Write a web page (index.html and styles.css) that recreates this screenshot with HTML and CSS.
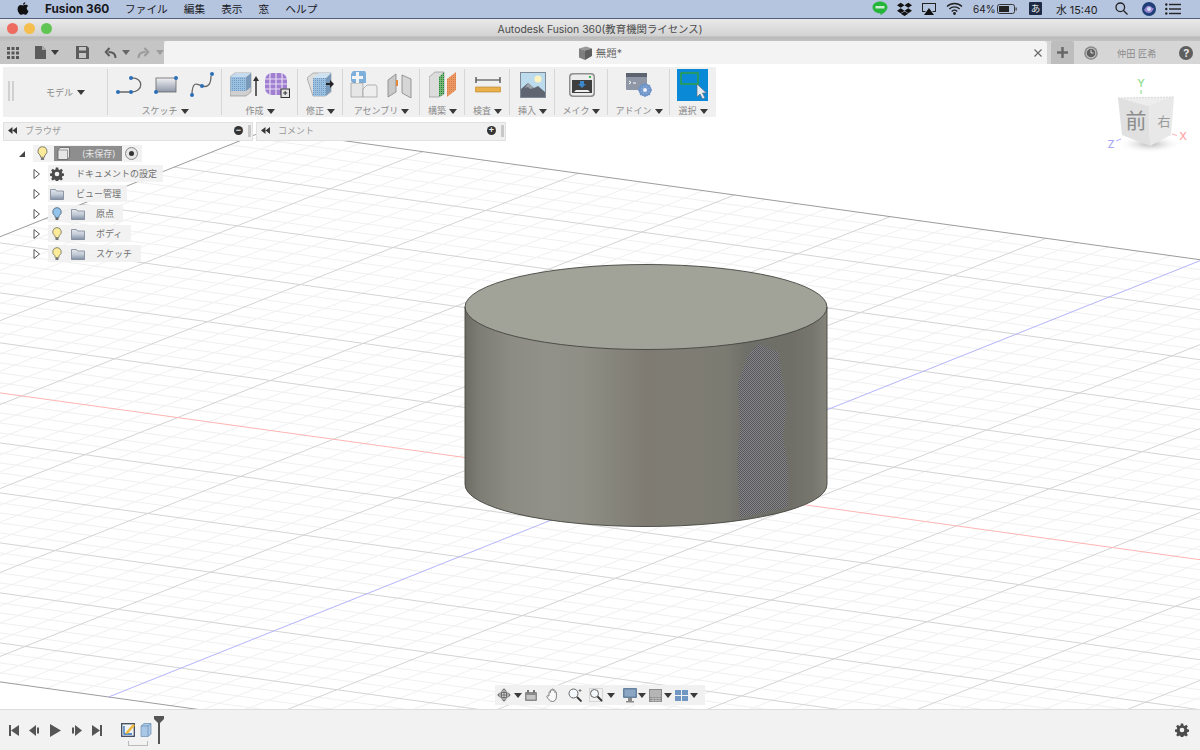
FILE: index.html
```html
<!DOCTYPE html>
<html lang="ja">
<head>
<meta charset="utf-8">
<title>Autodesk Fusion 360</title>
<link rel="stylesheet" href="styles.css">
</head>
<body>
<svg class="defs" width="0" height="0" aria-hidden="true">
  <defs>
    <linearGradient id="gFolder" x1="0" y1="0" x2="0" y2="1"><stop offset="0" stop-color="#e4e8ee"/><stop offset=".5" stop-color="#c2cad6"/><stop offset="1" stop-color="#7f8ea6"/></linearGradient>
    <linearGradient id="gSide" x1="0" y1="0" x2="1" y2="0">
      <stop offset="0" stop-color="#6c6c65"/><stop offset=".04" stop-color="#7d7d75"/><stop offset=".12" stop-color="#8b8b82"/><stop offset=".22" stop-color="#91918a"/><stop offset=".32" stop-color="#8f8f86"/><stop offset=".42" stop-color="#85847b"/><stop offset=".5" stop-color="#7f7b72"/><stop offset=".6" stop-color="#7f7d73"/><stop offset=".72" stop-color="#7b7b72"/><stop offset=".78" stop-color="#6f6f69"/><stop offset=".9" stop-color="#6f6f68"/><stop offset=".96" stop-color="#76766e"/><stop offset="1" stop-color="#84847b"/>
    </linearGradient>
    <pattern id="pDither" width="2" height="2" patternUnits="userSpaceOnUse"><rect width="2" height="2" fill="#88888c"/><rect width="1" height="1" fill="#55555a"/><rect x="1" y="1" width="1" height="1" fill="#55555a"/></pattern>
    <pattern id="pDots" width="2" height="2" patternUnits="userSpaceOnUse"><rect width="2" height="2" fill="#9cc0de"/><rect width="1" height="1" fill="#6f9dc8"/></pattern>
    <pattern id="pGreen" width="2" height="2" patternUnits="userSpaceOnUse"><rect width="2" height="2" fill="#78b478"/><rect width="1" height="1" fill="#1f8a3a"/></pattern>
    <pattern id="pOrange" width="2" height="2" patternUnits="userSpaceOnUse"><rect width="2" height="2" fill="#eb9a66"/><rect width="1" height="1" fill="#d87a44"/></pattern>
    <symbol id="folder" viewBox="0 0 14 12"><path d="M.5 1.500h5l1 1.500h7v8.500h-13z" fill="url(#gFolder)" stroke="#7b8494" stroke-width=".8"/></symbol>
    <symbol id="bulbY" viewBox="0 0 10 14"><path d="M5 .6a4.300 4.300 0 0 0-2.300 7.900l.6 2h3.400l.6-2A4.300 4.300 0 0 0 5 .6z" fill="#fbeb9a" stroke="#6f6f60" stroke-width=".8"/><path d="M3.500 11h3v2h-3z" fill="#777"/></symbol>
    <symbol id="bulbB" viewBox="0 0 10 14"><path d="M5 .6a4.300 4.300 0 0 0-2.300 7.900l.6 2h3.400l.6-2A4.300 4.300 0 0 0 5 .6z" fill="#93c4ec" stroke="#4e6276" stroke-width=".8"/><path d="M3.500 11h3v2h-3z" fill="#666"/></symbol>
    <symbol id="twisty" viewBox="0 0 8 12"><path d="M1 1.500l5.500 4.500L1 10.500z" fill="#fff" stroke="#555" stroke-width="1"/></symbol>
    <symbol id="gear" viewBox="0 0 24 24"><path fill="#4c4c4c" d="M10 1h4l.6 3.200 2 .8 2.700-1.900 2.800 2.800-1.900 2.700.8 2 3 .6v4l-3 .6-.8 2 1.900 2.700-2.800 2.800-2.700-1.900-2 .8-.6 3h-4l-.6-3-2-.8-2.700 1.900-2.800-2.800 1.900-2.700-.8-2-3-.6v-4l3-.6.8-2L1.900 5.900l2.800-2.800 2.700 1.900 2-.8zM12 8a4 4 0 1 0 0 8 4 4 0 0 0 0-8z"/></symbol>
  </defs>
</svg>

<div class="app">
  <header class="menubar">
    <svg class="apple" width="12" height="14" viewBox="0 0 12 14"><path d="M8.300.3c.1 1.100-.9 2.500-2.300 2.500C5.900 1.600 7 .4 8.300.3zM6.100 3.500c.6 0 1.500-.7 2.600-.7 1 0 1.900.5 2.400 1.300-2 1.200-1.700 3.900.4 4.800-.5 1.400-1.700 3.900-3 3.900-.8 0-1.100-.5-2.200-.5s-1.500.5-2.200.5C2.600 12.800.6 9.700.6 7.200c0-2.600 1.700-4.100 3.300-4.100.9 0 1.700.4 2.200.4z" fill="#111"/></svg>
    <nav class="menus">
      <strong class="appname">Fusion 360</strong>
      <span>ファイル</span><span>編集</span><span>表示</span><span>窓</span><span>ヘルプ</span>
    </nav>
    <div class="status">
      <svg width="16" height="15" viewBox="0 0 16 15"><path d="M8 .5c4.200 0 7.500 2.600 7.500 5.800 0 3-3.800 6-7 8 .3-1 .3-2-.5-2C3.800 12.300.5 9.600.5 6.300.5 3.100 3.800.5 8 .5z" fill="#25b53a"/><rect x="3.500" y="5" width="9" height="2.500" fill="#cdeecf"/></svg>
      <svg width="15" height="14" viewBox="0 0 15 14"><path d="M3.700.8L7.500 3.300 3.700 5.800 0 3.300zM11.300.8L15 3.300 11.300 5.800 7.500 3.300zM3.700 6.200l3.800 2.500-3.800 2.500L0 8.700zM11.300 6.200L15 8.700l-3.700 2.500-3.800-2.500zM3.800 11.800l3.700-2.400 3.700 2.400-3.700 2.200z" fill="#111"/></svg>
      <svg width="16" height="14" viewBox="0 0 16 14"><path d="M1 1h14v9h-3l-1-1h3V2H2v7h3l-1 1H1z" fill="#222"/><path d="M8 6l5 7H3z" fill="#111"/></svg>
      <svg width="17" height="13" viewBox="0 0 17 13" fill="none" stroke="#222" stroke-width="1.300"><path d="M1 4.500c4.200-4 10.800-4 15 0M3.300 7c3-2.800 7.400-2.800 10.400 0M5.700 9.400c1.700-1.500 3.900-1.500 5.600 0"/><circle cx="8.500" cy="11.500" r=".8" fill="#222"/></svg>
      <span class="st pct gap-1">64%</span>
      <svg class="gap-2" width="20" height="10" viewBox="0 0 20 10"><rect x=".5" y=".5" width="17" height="9" rx="2" fill="none" stroke="#333"/><rect x="2" y="2" width="10" height="6" fill="#222"/><rect x="18.500" y="3.500" width="1.300" height="3" fill="#444"/></svg>
      <span class="ime gap-3">あ</span>
      <span class="st clock gap-4">水 15:40</span>
      <svg class="gap-5" width="13" height="13" viewBox="0 0 13 13" fill="none" stroke="#222" stroke-width="1.300"><circle cx="5.300" cy="5.300" r="4.300"/><path d="M8.500 8.500l4 4"/></svg>
      <svg class="gap-6" width="14" height="14" viewBox="0 0 14 14"><circle cx="7" cy="7" r="7" fill="#1f3f78"/><path d="M2 8c2-4 4-5 6-4s3 3 4 2c-1 3-3 5-5 5S3 10 2 8z" fill="#9a86d0"/><circle cx="7" cy="7" r="2" fill="#cfe0f5"/></svg>
      <svg width="16" height="12" viewBox="0 0 16 12" fill="#222"><circle cx="1.300" cy="1.500" r="1.200"/><circle cx="1.300" cy="6" r="1.200"/><circle cx="1.300" cy="10.500" r="1.200"/><rect x="4" y=".8" width="12" height="1.400"/><rect x="4" y="5.300" width="12" height="1.400"/><rect x="4" y="9.800" width="12" height="1.400"/></svg>
    </div>
  </header>

  <div class="titlebar">
    <div class="lights"><i class="light red"></i><i class="light yellow"></i><i class="light green"></i></div>
    <div class="wintitle">Autodesk Fusion 360(教育機関ライセンス)</div>
    <div></div>
  </div>

  <div class="tabrow">
    <div class="tools">
      <svg class="t-grid" width="12" height="12" viewBox="0 0 12 12" fill="#565656"><rect width="3" height="3"/><rect x="4.500" width="3" height="3"/><rect x="9" width="3" height="3"/><rect y="4.500" width="3" height="3"/><rect x="4.500" y="4.500" width="3" height="3"/><rect x="9" y="4.500" width="3" height="3"/><rect y="9" width="3" height="3"/><rect x="4.500" y="9" width="3" height="3"/><rect x="9" y="9" width="3" height="3"/></svg>
      <svg class="t-doc" width="11" height="13" viewBox="0 0 11 13"><path d="M0 0h7l4 4v9H0z" fill="#5c5c5c"/><path d="M7 0l4 4H7z" fill="#aaa"/></svg>
      <i class="caret dark t-c1"></i>
      <svg class="t-save" width="13" height="13" viewBox="0 0 13 13"><path d="M0 0h11l2 2v11H0z" fill="#5c5c5c"/><rect x="3" y="1" width="7" height="3.500" fill="#c4c4c4"/><rect x="3" y="7" width="7" height="5" fill="#c4c4c4"/></svg>
      <svg class="t-undo" width="13" height="12" viewBox="0 0 13 12" fill="none" stroke="#5a5a5a" stroke-width="2"><path d="M11.500 11c0-4-2.500-6-7-6"/><path d="M5.500 1L1.800 5l3.700 4"/></svg>
      <i class="caret mid t-c2"></i>
      <svg class="t-redo" width="13" height="12" viewBox="0 0 13 12" fill="none" stroke="#9a9a9a" stroke-width="2"><path d="M1.500 11c0-4 2.500-6 7-6"/><path d="M7.500 1l3.700 4-3.700 4"/></svg>
      <i class="caret light-c t-c3"></i>
    </div>
    <div class="tab">
      <div class="tabname">
        <svg width="15" height="14" viewBox="0 0 15 14"><path d="M1 2.500L8 .5l6 2-7 2z" fill="#9a9a9a"/><path d="M1 2.500l6 2V14l-6-2.500z" fill="#7e7e7e"/><path d="M7 4.500l7-2v7.500L7 14z" fill="#5e5e5e"/></svg>
        <span>無題*</span>
      </div>
      <svg class="tabclose" width="8" height="8" viewBox="0 0 8 8" stroke="#666" stroke-width="1.100"><path d="M.5.500l7 7M7.500.500l-7 7"/></svg>
    </div>
    <div class="tabright">
      <button class="plus"><svg width="11" height="11" viewBox="0 0 11 11" fill="#666"><rect x="4.300" width="2.400" height="11"/><rect y="4.300" width="11" height="2.400"/></svg></button>
      <svg class="clockicon" width="14" height="14" viewBox="0 0 14 14"><circle cx="7" cy="7" r="6.800" fill="#8a8a8a"/><circle cx="7" cy="7" r="5.200" fill="#c9c9c9"/><circle cx="7" cy="7" r="4.300" fill="#5e5e5e"/><path d="M7 3.800V7h2.600" stroke="#ddd" fill="none"/></svg>
      <span class="user">仲田 匠希</span>
      <span class="help">?</span>
    </div>
  </div>

  <main class="stage">
    <svg class="scene" width="1200" height="645" viewBox="0 64 1200 645">
      <g transform="matrix(155.8 21.66 -92.8 37.1 267 130)" class="grid">
        <g class="minor">
          <path id="mu" d="M.2 0V11.78M.4 0V11.78M.6 0V11.78M.8 0V11.78"/>
          <use href="#mu" x="1"/><use href="#mu" x="2"/><use href="#mu" x="3"/><use href="#mu" x="4"/><use href="#mu" x="5"/><use href="#mu" x="6"/><use href="#mu" x="7"/><use href="#mu" x="8"/><use href="#mu" x="9"/><use href="#mu" x="10"/><use href="#mu" x="11"/><use href="#mu" x="12"/>
          <path id="mv" d="M0 .2H13M0 .4H13M0 .6H13M0 .8H13"/>
          <use href="#mv" y="1"/><use href="#mv" y="2"/><use href="#mv" y="3"/><use href="#mv" y="4"/><use href="#mv" y="5"/><use href="#mv" y="6"/><use href="#mv" y="7"/><use href="#mv" y="8"/><use href="#mv" y="9"/><use href="#mv" y="10"/>
          <path d="M0 11.2H13M0 11.4H13M0 11.6H13"/>
        </g>
        <path class="major" d="M1 0V11.78M2 0V11.78M3 0V11.78M4 0V11.78M5 0V11.78M7 0V11.78M8 0V11.78M9 0V11.78M10 0V11.78M11 0V11.78M12 0V11.78M0 1H13M0 2H13M0 3H13M0 4H13M0 5H13M0 7H13M0 8H13M0 9H13M0 10H13M0 11H13"/>
        <path class="edge" d="M13 0H0V11.78H13"/>
        <path class="axis-x" d="M0 6H13"/>
        <path class="axis-z" d="M6 0V11.78"/>
      </g>
      <path d="M465 307V484.500A181 42 0 0 0 827 484.500V307z" fill="url(#gSide)"/>
      <path d="M758 344L778 352L782 377L787 407L783 437L788 467L788 507L740 518L737 463L740 430L738 383L747 357z" fill="url(#pDither)" opacity=".9"/>
      <ellipse cx="646" cy="307" rx="181" ry="42.500" fill="#a1a399" stroke="#45453f" stroke-width=".9"/>
      <path d="M465 307V484.500A181 42 0 0 0 827 484.500V307" fill="none" stroke="#45453f" stroke-width=".9"/>
    </svg>

    <div class="ribbon">
      <div class="handle"><i></i><i></i></div>
      <div class="rgroup g-model"><span class="modelname">モデル <i class="caret dark"></i></span></div>
      <div class="rgroup g-sketch">
        <div class="ricons">
          <svg width="28" height="22" viewBox="0 0 28 22"><path d="M3 18H16M16 4c13-1 13 14 0 14" fill="none" stroke="#666" stroke-width="1.300"/><circle cx="3" cy="18" r="2" fill="#2a70b8"/><circle cx="16" cy="18" r="2" fill="#2a70b8"/><circle cx="16" cy="4" r="2" fill="#2a70b8"/></svg>
          <svg width="26" height="22" viewBox="0 0 26 22"><defs><linearGradient id="gRect" x1="0" y1="0" x2="0" y2="1"><stop offset="0" stop-color="#f0f1f4"/><stop offset="1" stop-color="#8f97a8"/></linearGradient></defs><rect x="3" y="4" width="20" height="14" fill="url(#gRect)" stroke="#666" stroke-width=".8"/><circle cx="23" cy="4" r="2" fill="#2a70b8"/><circle cx="3" cy="18" r="2" fill="#2a70b8"/></svg>
          <svg width="26" height="28" viewBox="0 0 26 28"><path d="M3 24C3 9 9 13 13 15 19 17 22 13 22 5" fill="none" stroke="#666" stroke-width="1.300"/><circle cx="3" cy="24" r="2" fill="#2a70b8"/><circle cx="13" cy="15" r="2" fill="#2a70b8"/><circle cx="23" cy="3" r="2" fill="#2a70b8"/></svg>
        </div>
        <div class="rlabel">スケッチ<i class="caret dark"></i></div>
      </div>
      <div class="rgroup g-create">
        <div class="ricons gap-s">
          <svg width="31" height="26" viewBox="0 0 31 26"><path d="M0 5l5-4h16v19l-5 4H0z" fill="#d0d0d0" stroke="#888" stroke-width=".6"/><rect x=".5" y="5" width="15.500" height="14" fill="url(#pDots)"/><path d="M16 5l5-4v14l-5 4z" fill="#7a98b8"/><path d="M.5 5l5-4H21l-5 4z" fill="#c6dcee"/><path d="M26 24V6" stroke="#333" stroke-width="1.500"/><path d="M23 9l3-5 3 5z" fill="#333"/></svg>
          <svg width="25" height="26" viewBox="0 0 25 26"><rect x="0" y="1" width="22" height="22" rx="7" fill="#a17fd0"/><path d="M0 7h22M0 12h22M0 17h22M5 1v22M11 1v22M17 1v22" stroke="#e6dcf5" stroke-width="1.200"/><rect x="16" y="17" width="8.500" height="8.500" fill="#e4e4e4" stroke="#333"/><path d="M20.200 19v4M18.200 21h4" stroke="#333"/></svg>
        </div>
        <div class="rlabel">作成<i class="caret dark"></i></div>
      </div>
      <div class="rgroup g-modify">
        <div class="ricons">
          <svg width="27" height="26" viewBox="0 0 27 26"><path d="M0 6l6-5h18v19l-6 4H6z" fill="#dedede" stroke="#888" stroke-width=".6"/><rect x="6" y="6" width="13" height="18" fill="url(#pDots)"/><path d="M19 6l5-5v18l-5 5z" fill="#7a98b8"/><path d="M6 6l6-5h12l-5 5z" fill="#cfe2f2"/><path d="M19 11h4V8l4 4-4 4v-3h-4z" fill="#222"/></svg>
        </div>
        <div class="rlabel">修正<i class="caret dark"></i></div>
      </div>
      <div class="rgroup g-assembly">
        <div class="ricons gap-a">
          <svg width="28" height="27" viewBox="0 0 28 27"><path d="M3 0h12l1 2v10H3L1 10V3z" fill="#7fb0dc"/><path d="M1 12h12v14H1z" fill="#e6e6e6" stroke="#8a8a8a" stroke-width=".6"/><path d="M13 18l4-4h9l1 2v10H13z" fill="#eee" stroke="#8a8a8a" stroke-width=".6"/><path d="M6 1h3v4h4v3H9v4H6V8H2V5h4z" fill="#f3f3f3"/></svg>
          <svg width="26" height="26" viewBox="0 0 26 26"><path d="M1 8l8-6v18l-8 5z" fill="#c9c9c9" stroke="#777" stroke-width=".7"/><path d="M15 3l9 4v19l-9-5z" fill="#d6d6d6" stroke="#777" stroke-width=".7"/><rect x="9" y="8" width="2" height="6" fill="#e28a3c"/></svg>
        </div>
        <div class="rlabel">アセンブリ<i class="caret dark"></i></div>
      </div>
      <div class="rgroup g-build">
        <div class="ricons">
          <svg width="27" height="27" viewBox="0 0 27 27"><path d="M0 6l6-5h9v22l-5 3H0z" fill="#dcdcdc" stroke="#888" stroke-width=".6"/><path d="M10 6l5-5v22l-5 3z" fill="url(#pGreen)"/><path d="M18 8l9-7v18l-9 7z" fill="url(#pOrange)"/></svg>
        </div>
        <div class="rlabel">構築<i class="caret dark"></i></div>
      </div>
      <div class="rgroup g-inspect">
        <div class="ricons">
          <svg width="26" height="18" viewBox="0 0 26 18"><path d="M1 4h24" stroke="#555" stroke-width="1.200"/><path d="M1 1v6M25 1v6" stroke="#555" stroke-width="1.400"/><rect x="0" y="11" width="26" height="5" rx="1" fill="#eab04a" stroke="#b08030" stroke-width=".6"/></svg>
        </div>
        <div class="rlabel">検査<i class="caret dark"></i></div>
      </div>
      <div class="rgroup g-insert">
        <div class="ricons">
          <svg width="26" height="26" viewBox="0 0 26 26"><rect width="26" height="26" fill="#808a96"/><rect x="1" y="1" width="24" height="24" fill="#bcdcee"/><circle cx="18" cy="7" r="3.500" fill="#fff3c0"/><path d="M1 25V17l7-6 6 5 4-2 7 6v5z" fill="#5f6672"/><path d="M8 11l6 5-4 1-2-2-3 1z" fill="#9aa0aa"/></svg>
        </div>
        <div class="rlabel">挿入<i class="caret dark"></i></div>
      </div>
      <div class="rgroup g-make">
        <div class="ricons">
          <svg width="26" height="24" viewBox="0 0 26 24"><rect width="26" height="24" rx="4" fill="#8e8e8e"/><rect x="1.500" y="1.500" width="23" height="21" rx="3" fill="#ececec"/><rect x="3" y="7" width="20" height="13" fill="#3e3e3e"/><path d="M7 17h12l2 2H5z" fill="#eee"/><path d="M11 8h4v3h2l-4 4-4-4h2z" fill="#3b86c9"/><rect x="20" y="3" width="2" height="2" fill="#3fb44e"/></svg>
        </div>
        <div class="rlabel">メイク<i class="caret dark"></i></div>
      </div>
      <div class="rgroup g-addin">
        <div class="ricons">
          <svg width="26" height="24" viewBox="0 0 26 24"><rect width="21" height="17" rx="1" fill="#8f97a6"/><rect y="0" width="21" height="4" fill="#5d6470"/><path d="M3 8l2 1.500L3 11M7 10h3" stroke="#fff" fill="none"/><circle cx="19" cy="17" r="6.500" fill="#6f94c8"/><circle cx="19" cy="17" r="4.500" fill="#88abd8"/><circle cx="19" cy="17" r="1.800" fill="#eef3fa"/><path d="M19 10v14M12 17h14M14 12l10 10M24 12L14 22" stroke="#6f94c8" stroke-width="1.300"/><circle cx="19" cy="17" r="2" fill="#eef3fa"/></svg>
        </div>
        <div class="rlabel">アドイン<i class="caret dark"></i></div>
      </div>
      <div class="rgroup g-select last">
        <div class="selbox">
          <svg width="31" height="32" viewBox="0 0 31 32"><rect x="4" y="4" width="17" height="11" fill="none" stroke="#35a32e" stroke-width="1.300"/><path d="M20 15l0 13 3-3 2.500 5 2.500-1-2.500-5h4z" fill="#e8ecf2" stroke="#5a6a80" stroke-width=".7"/></svg>
        </div>
        <div class="rlabel">選択<i class="caret dark"></i></div>
      </div>
    </div>

    <div class="panels">
      <div class="panel">
        <i class="rewind"></i><span class="ptitle">ブラウザ</span>
        <span class="pbtn">−</span><i class="pgrip"></i>
      </div>
      <div class="panel">
        <i class="rewind"></i><span class="ptitle">コメント</span>
        <span class="pbtn">+</span><i class="pgrip"></i>
      </div>
    </div>

    <div class="tree">
      <div class="row root">
        <svg class="expanded" width="8" height="8" viewBox="0 0 8 8"><path d="M7 1v6H1z" fill="#444"/></svg>
        <div class="pill rootpill">
          <svg class="ic-bulb" width="11" height="15"><use href="#bulbY"/></svg>
          <span class="rootname">
            <svg width="13" height="13" viewBox="0 0 13 13"><path d="M1 3l2-2.500h9.500V10L10.500 12.500H1z" fill="#e6e6e6" stroke="#555" stroke-width=".7"/><path d="M1 3h9.500v9.500" fill="none" stroke="#777" stroke-width=".7"/></svg>
            <span>(未保存)</span>
          </span>
          <svg class="radio" width="13" height="13" viewBox="0 0 13 13"><circle cx="6.500" cy="6.500" r="6" fill="#e6e6e6" stroke="#888"/><circle cx="6.500" cy="6.500" r="2.500" fill="#333"/></svg>
        </div>
      </div>
      <div class="row">
        <svg class="twisty" width="8" height="12"><use href="#twisty"/></svg>
        <div class="pill"><svg class="ic-first" width="14" height="14"><use href="#gear"/></svg><span class="label">ドキュメントの設定</span></div>
      </div>
      <div class="row">
        <svg class="twisty" width="8" height="12"><use href="#twisty"/></svg>
        <div class="pill"><svg class="ic-first" width="14" height="12"><use href="#folder"/></svg><span class="label">ビュー管理</span></div>
      </div>
      <div class="row">
        <svg class="twisty" width="8" height="12"><use href="#twisty"/></svg>
        <div class="pill wide"><svg class="ic-bulb2" width="10" height="14"><use href="#bulbB"/></svg><svg class="ic-folder2" width="14" height="12"><use href="#folder"/></svg><span class="label lab2">原点</span></div>
      </div>
      <div class="row">
        <svg class="twisty" width="8" height="12"><use href="#twisty"/></svg>
        <div class="pill wide"><svg class="ic-bulb2" width="10" height="14"><use href="#bulbY"/></svg><svg class="ic-folder2" width="14" height="12"><use href="#folder"/></svg><span class="label lab2">ボディ</span></div>
      </div>
      <div class="row">
        <svg class="twisty" width="8" height="12"><use href="#twisty"/></svg>
        <div class="pill wide"><svg class="ic-bulb2" width="10" height="14"><use href="#bulbY"/></svg><svg class="ic-folder2" width="14" height="12"><use href="#folder"/></svg><span class="label lab2">スケッチ</span></div>
      </div>
    </div>

    <svg class="viewcube" width="90" height="80" viewBox="1105 76 90 80">
      <defs><radialGradient id="gShadow"><stop offset="0" stop-color="#b4b4b4"/><stop offset="1" stop-color="#fff" stop-opacity="0"/></radialGradient></defs>
      <ellipse cx="1150" cy="144" rx="32" ry="9" fill="url(#gShadow)"/>
      <path d="M1118 98L1174 97 1149 107z" fill="#ededed" stroke="#c4c4c4" stroke-width=".6" stroke-dasharray="2 1"/>
      <path d="M1118 98L1149 107 1150 146 1122 135z" fill="#e0e0e0"/>
      <path d="M1149 107L1174 97 1171 135 1150 146z" fill="#e8e8e8"/>
      <text x="1136" y="128" class="cube-front">前</text>
      <text x="1164" y="126" class="cube-right">右</text>
      <path d="M1141 90v4" stroke="#7fdc7f"/><text x="1141" y="87" class="cube-y">Y</text>
      <path d="M1172 134l5 1.500" stroke="#ffb0b0"/><text x="1183" y="140" class="cube-x">X</text>
      <path d="M1116 141l5-2" stroke="#b0b0ff"/><text x="1111" y="148" class="cube-z">Z</text>
    </svg>

    <div class="navbar">
      <svg class="n1" width="14" height="14" viewBox="0 0 14 14" fill="none" stroke="#666"><path d="M7 1v12M1 7h12"/><ellipse cx="7" cy="7" rx="6" ry="2.500"/><ellipse cx="7" cy="7" rx="2.500" ry="6"/></svg>
      <i class="caret dark n2"></i>
      <svg class="n3" width="12" height="11" viewBox="0 0 12 11"><rect y="2" width="12" height="9" rx="1" fill="#8a8a8a"/><rect x="2" width="2" height="3" fill="#777"/><rect x="8" width="2" height="3" fill="#777"/><rect x="1.500" y="5" width="9" height="4.500" fill="#c4c4c4"/></svg>
      <svg class="n4" width="14" height="14" viewBox="0 0 14 14"><path d="M3 8V4.500c0-1 1.400-1 1.400 0V2.500c0-1 1.500-1 1.500 0v-.8c0-1 1.500-1 1.500 0v.8c0-1 1.500-1 1.500 0v2c0-1 1.500-1 1.500 0V9c0 3-2 4.500-4 4.500-2.500 0-3.500-2-5.500-4.500-.6-1 .6-1.800 1.500-1z" fill="#fafafa" stroke="#666" stroke-width=".8"/></svg>
      <svg class="n5" width="14" height="14" viewBox="0 0 14 14" fill="none"><circle cx="5.500" cy="5.500" r="4.500" fill="#f4f8fc" stroke="#666"/><path d="M9 9l4.500 4.500" stroke="#333" stroke-width="1.800"/><path d="M12 1v3M10.500 2.500h3" stroke="#666" stroke-width=".8"/></svg>
      <svg class="n6" width="14" height="14" viewBox="0 0 14 14" fill="none"><rect x=".5" y=".5" width="13" height="13" stroke="#bbb" stroke-dasharray="1 1"/><circle cx="5.500" cy="5.500" r="4" fill="#f4f8fc" stroke="#666"/><path d="M8.500 8.500l4.500 4.500" stroke="#333" stroke-width="1.800"/></svg>
      <i class="caret dark n7"></i>
      <svg class="n8" width="14" height="15" viewBox="0 0 14 15"><rect width="14" height="10" rx="1" fill="#67829e"/><rect x="1.500" y="1.500" width="11" height="7" fill="#8aa6c4"/><path d="M5 10h4v3H5z" fill="#8a8a8a"/><path d="M3 13h8v1.500H3z" fill="#8a8a8a"/></svg>
      <i class="caret dark n9"></i>
      <svg class="n10" width="13" height="13" viewBox="0 0 13 13"><rect width="13" height="13" fill="#8c8c8c"/><rect x="1" y="1" width="11" height="7" fill="#b5b5b5"/><path d="M1 9.500h11M1 11.500h11M4 8v5M7 8v5M10 8v5" stroke="#ccc" stroke-width=".6"/></svg>
      <i class="caret dark n11"></i>
      <svg class="n12" width="13" height="11" viewBox="0 0 13 11" fill="#7096c4"><rect width="6" height="5"/><rect x="7" width="6" height="5"/><rect y="6" width="6" height="5"/><rect x="7" y="6" width="6" height="5"/></svg>
      <i class="caret dark n13"></i>
    </div>
  </main>

  <footer class="timeline">
    <div class="player">
      <svg width="10" height="11" viewBox="0 0 10 11" fill="#555"><rect width="2" height="11"/><path d="M10 0v11L2 5.500z"/></svg>
      <svg width="11" height="11" viewBox="0 0 11 11" fill="#555"><path d="M7 0v11L0 5.500z"/><rect x="8" y="2.500" width="2" height="6"/></svg>
      <svg width="11" height="13" viewBox="0 0 11 13" fill="#555"><path d="M0 0v13l11-6.500z"/></svg>
      <svg width="11" height="11" viewBox="0 0 11 11" fill="#555"><rect x="1" y="2.500" width="2" height="6"/><path d="M4 0v11l7-5.500z"/></svg>
      <svg width="10" height="11" viewBox="0 0 10 11" fill="#555"><rect x="8" width="2" height="11"/><path d="M0 0v11l8-5.500z"/></svg>
    </div>
    <div class="track">
      <svg width="14" height="14" viewBox="0 0 14 14"><rect x=".7" y=".7" width="12.600" height="12.600" fill="#f1f3f6" stroke="#3d4a5c" stroke-width="1.300"/><path d="M3 3v8h8" fill="none" stroke="#2a70b8" stroke-width="1.300"/><path d="M5 9l7-8 2 1.500L7 10.500 4.500 11z" fill="#f0b93a"/></svg>
      <svg width="12" height="14" viewBox="0 0 12 14"><path d="M1 3l3-2.500h7V11l-3 2.500H1z" fill="#a9c7e6" stroke="#6c8eb2" stroke-width=".7"/><path d="M8 3v10.500M8 3l3-2.500M1 3h7" stroke="#6c8eb2" fill="none" stroke-width=".7"/></svg>
      <svg class="marker" width="10" height="28" viewBox="0 0 10 28"><path d="M0 0h10v3L6 7v21H4V7L0 3z" fill="#555"/></svg>
      <i class="bracket"></i>
    </div>
    <svg class="settings" width="14" height="14"><use href="#gear"/></svg>
  </footer>
</div>
</body>
</html>
```
FILE: styles.css
```css
* { box-sizing: border-box; }
html, body { margin: 0; padding: 0; background: #fff; }
body { font-family: Inter, "Noto Sans CJK JP", sans-serif; overflow: hidden; }
.defs { position: absolute; }
svg { display: block; flex: none; }
i { display: block; flex: none; }
.app { width: 1200px; height: 750px; display: flex; flex-direction: column; overflow: hidden; }

/* mac menu bar */
.menubar { height: 19px; flex: none; display: flex; align-items: center; padding: 0 19px 1px 17px; background: #b6c5df; border-bottom: 1px solid #4f5f7c; color: #16181d; font-size: 10.7px; font-family: "Noto Sans CJK JP", sans-serif; }
.apple { margin-right: 16px; }
.menus { display: flex; gap: 16px; align-items: center; }
.appname { font: 700 11.8px Inter, sans-serif; width: 64px; white-space: nowrap; }
.status { margin-left: auto; display: flex; align-items: center; gap: 9px; }
.st { font: 11.5px Inter, sans-serif; color: #222; white-space: nowrap; }
.pct { font-size: 10px; width: 20px; }
.clock { font-size: 10.8px; font-family: Inter, "Noto Sans CJK JP", sans-serif; width: 43px; }
.gap-1 { margin-left: 1px; }
.gap-2 { margin-left: -5px; }
.gap-3 { margin-left: 3px; }
.gap-4 { margin-left: 5px; }
.gap-5 { margin-left: 7px; }
.gap-6 { margin-left: 5px; }
.ime { width: 13px; height: 13px; background: #1e2a44; color: #e8e8e8; font-size: 9.5px; line-height: 13px; text-align: center; border-radius: 1px; }

/* window title bar */
.titlebar { height: 22px; flex: none; display: grid; grid-template-columns: 1fr auto 1fr; align-items: center; padding-bottom: 4px; background: linear-gradient(#e9e9e9 0, #d3d3d3 76%, #b9b9b9 82%, #c2c2c2 100%); }
.lights { display: flex; gap: 6px; padding-left: 7px; }
.light { width: 11px; height: 11px; border-radius: 50%; }
.red { background: #ee6b5f; }
.yellow { background: #f4bf4f; }
.green { background: #61c554; }
.wintitle { font-size: 10.4px; color: #4a4a4a; white-space: nowrap; }

/* document tabs row */
.tabrow { height: 23px; flex: none; display: flex; background: #d6d6d6; }
.tools { width: 164px; position: relative; display: flex; align-items: center; padding-left: 7px; background: #c5c5c5; }
.t-doc { margin-left: 16px; }
.t-c1 { margin-left: 5px; }
.t-save { margin-left: 17px; }
.t-undo { margin-left: 15px; }
.t-c2 { margin-left: 5px; }
.t-redo { margin-left: 7px; }
.t-c3 { margin-left: 6px; }
.caret { width: 0; height: 0; display: inline-block; border-left: 4px solid transparent; border-right: 4px solid transparent; border-top: 5px solid #3a3a3a; }
.caret.mid { border-top-color: #666; }
.caret.light-c { border-top-color: #9c9c9c; }
.tab { width: 883px; display: grid; grid-template-columns: 1fr auto 1fr; align-items: center; background: #f3f3f3; border-radius: 3px 3px 0 0; }
.tabname { grid-column: 2; display: flex; align-items: center; gap: 3px; margin-right: 11px; font-size: 10.5px; color: #666; }
.tabclose { grid-column: 3; justify-self: end; margin-right: 5px; }
.tabright { flex: 1; display: flex; align-items: center; padding-left: 4px; }
.plus { width: 23px; height: 23px; border: 0; padding: 0; background: #bdbdbd; display: flex; align-items: center; justify-content: center; border-radius: 2px 2px 0 0; }
.clockicon { margin-left: 10px; }
.user { margin-left: 19px; font-size: 9.2px; color: #8a8a8a; white-space: nowrap; }
.help { margin-left: 23px; width: 14px; height: 14px; border-radius: 50%; background: #5e5e5e; color: #e6e6e6; font: 700 11px/14px Inter, sans-serif; text-align: center; }

/* 3D stage */
.stage { flex: 1; position: relative; display: flex; flex-direction: column; min-height: 0; background: #fff; }
.scene { position: absolute; left: 0; top: 0; }
.grid path { fill: none; vector-effect: non-scaling-stroke; stroke-width: 1px; }
.minor path { stroke: #f0f0f0; }
.major { stroke: #d4d4d4; }
.edge { stroke: #9c9c9c; }
.axis-x { stroke: #ffb4b4; }
.axis-z { stroke: #b4b4fc; }

/* ribbon */
.ribbon { position: relative; margin: 3px 0 0 3px; width: 713px; height: 50px; flex: none; display: flex; background: #f0f0f0; }
.handle { position: absolute; left: 5px; top: 14px; display: flex; gap: 2px; }
.handle i { width: 2px; height: 20px; background: #d0d0d0; }
.rgroup { position: relative; display: flex; flex-direction: column; align-items: center; }
.rgroup::after { content: ""; position: absolute; right: 0; top: 2px; bottom: 2px; width: 1px; background: #d6d6d6; }
.rgroup.last::after { display: none; }
.ricons { height: 35px; margin-bottom: 3px; display: flex; align-items: center; gap: 10px; }
.gap-s { gap: 4px; }
.gap-a { gap: 9px; }
.rlabel { display: flex; align-items: center; gap: 3px; font-size: 9px; line-height: 12px; color: #8a8a8a; white-space: nowrap; }
.g-model { width: 105px; justify-content: center; }
.modelname { display: flex; align-items: center; gap: 4px; margin-left: 20px; margin-top: 1px; font-size: 9px; color: #8a8a8a; }
.g-sketch { width: 114px; }
.g-create { width: 76px; }
.g-modify { width: 45px; }
.g-assembly { width: 77px; }
.g-build, .g-inspect, .g-insert { width: 45px; }
.g-make { width: 53px; }
.g-addin { width: 62px; }
.g-select { width: 46px; padding-top: 2px; }
.selbox { width: 31px; height: 32px; margin: 0 1px 4px 0; background: #0a8ad6; }

/* browser / comment headers */
.panels { position: relative; margin: 5px 0 0 3px; display: flex; gap: 3px; flex: none; }
.panel { width: 250px; height: 19px; display: flex; align-items: center; padding: 0 1px 2px 4px; background: #f0f0f0; border: 1px solid #e0e0e0; font-size: 9px; color: #9a9a9a; }
.rewind { width: 9px; height: 7px; background: #3a3a3a; clip-path: polygon(0 50%, 50% 0, 50% 100%, 50% 50%, 100% 0, 100% 100%, 50% 50%, 50% 100%); }
.ptitle { margin-left: 8px; }
.pbtn { margin-left: auto; width: 9px; height: 9px; border-radius: 50%; background: #333; color: #eee; font: 700 9px/9px "Liberation Sans", sans-serif; text-align: center; }
.pgrip { margin-left: 5px; width: 3px; height: 12px; background: #c8c8c8; }

/* tree */
.tree { position: relative; margin-top: 4px; display: flex; flex-direction: column; gap: 3px; flex: none; align-items: flex-start; }
.row { height: 17px; display: flex; align-items: center; padding-left: 33px; }
.twisty { margin-right: 7px; }
.pill { height: 17px; display: flex; align-items: center; padding-right: 6px; background: rgba(241, 241, 241, .92); font-size: 9px; color: #6f6f6f; white-space: nowrap; }
.pill.wide { padding-right: 9px; }
.root { padding-left: 18px; }
.expanded { margin-right: 7px; }
.rootpill { padding-right: 4px; }
.ic-bulb { margin: 0 6px 0 4px; }
.rootname { width: 68px; height: 15px; display: flex; align-items: center; padding-left: 3px; background: #8e8e8e; color: #e6e6e6; }
.rootname span { margin-left: 12px; }
.radio { margin-left: 3px; }
.ic-first { margin-left: 2px; width: 14px; }
.label { margin-left: 12px; }
.ic-bulb2 { margin-left: 4px; }
.ic-folder2 { margin-left: 9px; }
.lab2 { margin-left: 11px; }

/* view cube */
.viewcube { position: absolute; left: 1105px; top: 12px; }
.cube-front { font: 21px "Noto Sans CJK JP", sans-serif; fill: #8c8c8c; text-anchor: middle; }
.cube-right { font: 13px "Noto Sans CJK JP", sans-serif; fill: #9a9a9a; text-anchor: middle; }
.cube-y, .cube-x, .cube-z { font: 500 11px Inter, sans-serif; text-anchor: middle; }
.cube-y { fill: #8fe08f; }
.cube-x { fill: #ffa8a8; }
.cube-z { fill: #a8a8f5; }

/* navigation bar */
.navbar { position: relative; margin-top: auto; margin-bottom: 4px; align-self: center; width: 210px; height: 20px; flex: none; display: flex; align-items: center; padding-left: 3px; background: rgba(240, 240, 240, .95); }
.n1 { margin-left: -1px; }
.n2 { margin-left: 3px; }
.n3 { margin-left: 3px; }
.n4 { margin-left: 9px; }
.n5 { margin-left: 8px; }
.n6 { margin-left: 7px; }
.n7 { margin-left: 4px; }
.n8 { margin-left: 8px; }
.n9 { margin-left: 1px; }
.n10 { margin-left: 3px; }
.n11 { margin-left: 2px; }
.n12 { margin-left: 3px; }
.n13 { margin-left: 2px; }

/* timeline */
.timeline { height: 41px; flex: none; display: flex; align-items: center; padding: 0 11px 0 9px; background: #f2f2f2; border-top: 1px solid #dedede; }
.player { display: flex; align-items: center; gap: 10px; }
.track { position: relative; margin-left: 19px; display: flex; align-items: center; gap: 5px; }
.marker { margin-left: -3px; }
.bracket { position: absolute; left: 7px; top: 25px; width: 20px; height: 5px; border: 1px solid #bbb; border-top: 0; }
.settings { margin-left: auto; }
```
